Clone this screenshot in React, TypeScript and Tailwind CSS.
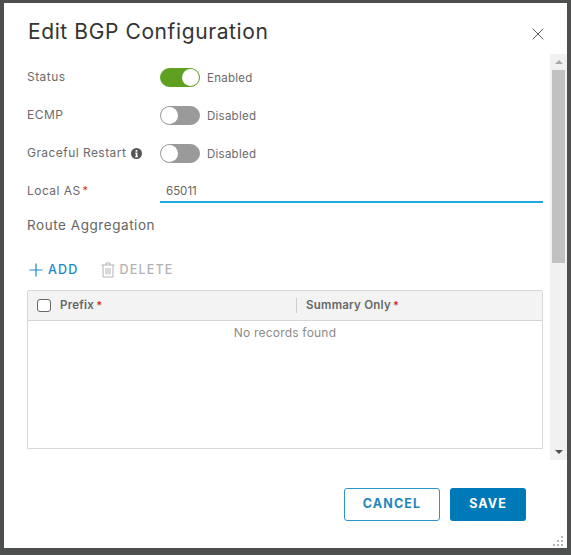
import React from 'react';
import { X } from 'lucide-react';

const Required = () => <span className="text-[#d9301a] text-[11px] ml-[2px] leading-none relative -top-[1px]">*</span>;

const Toggle: React.FC<{ on?: boolean }> = ({ on }) => (
  <div className="flex items-center gap-[7px]">
    <div
      className={`w-[40px] h-[19px] rounded-full flex items-center border ${
        on ? 'bg-[#60a020] border-[#60a020] justify-end' : 'bg-[#9a9a9a] border-[#9a9a9a] justify-start'
      }`}
    >
      <div className="w-[17px] h-[17px] rounded-full bg-white" />
    </div>
    <span className="text-[11.5px] tracking-[0.25px] text-[#6a6a6a] pt-[3px]">{on ? 'Enabled' : 'Disabled'}</span>
  </div>
);

const Row: React.FC<{ label: React.ReactNode; children: React.ReactNode }> = ({ label, children }) => (
  <div className="flex items-center h-[38px]">
    <div className="w-[133px] flex items-center text-[12px] tracking-[0.45px] text-[#6a6a6a]">{label}</div>
    <div className="flex-1">{children}</div>
  </div>
);

const App: React.FC = () => {
  return (
    <div className="w-[571px] h-[555px] bg-[#4d4f4f] pt-[3px] pl-[4px] font-['Inter','Liberation_Sans',sans-serif] overflow-hidden">
      <div className="relative w-[563px] h-[545px] bg-white flex flex-col">
        <div className="flex items-center justify-between h-[51px] pl-[24px] pr-[19px] pt-[4px]">
          <h1 className="text-[21px] leading-none text-[#333] tracking-[0.6px] mt-[2px]">Edit BGP Configuration</h1>
          <X className="w-[20px] h-[20px] text-[#555] mt-[6px]" strokeWidth={1.15} />
        </div>

        <div className="flex flex-1 pl-[23px]">
          <div className="flex-1 flex flex-col pr-[7px] pt-[4px]">
            <Row label="Status"><Toggle on /></Row>
            <Row label="ECMP"><Toggle /></Row>
            <Row
              label={
                <>
                  Graceful Restart
                  <svg viewBox="0 0 12 12" className="w-[11px] h-[11px] ml-[5px]">
                    <circle cx="6" cy="6" r="6" fill="#555" />
                    <path d="M5 2.3H7V4H5ZM4.6 5H7V8.8H7.6V10H4.6V8.8H5.2V6.2H4.6Z" fill="#fff" />
                  </svg>
                </>
              }
            >
              <Toggle />
            </Row>
            <div className="flex items-start h-[38px]">
              <div className="w-[133px] h-[38px] text-[12px] tracking-[0.45px] text-[#6a6a6a] flex items-center">
                Local AS<Required />
              </div>
              <div className="flex-1 h-[24px] mt-[7px] flex items-center pl-[6px] pt-[3px] border-b-2 border-[#1ea7e1] text-[11.5px] text-[#666]">
                65011
              </div>
            </div>
            <div className="text-[13.5px] tracking-[0.55px] text-[#666] mt-[5px] mb-[1px] leading-[20px]">Route Aggregation</div>

            <div className="flex items-center h-[20px] mt-[24px] text-[12.5px] font-medium tracking-[1.2px]">
              <div className="flex items-center text-[#1d8ac7] ml-[2px]">
                <svg viewBox="0 0 14 14" className="w-[14px] h-[14px] mr-[5px]" fill="none" stroke="#1d8ac7" strokeWidth="1.2">
                  <path d="M7 0.5V13.5M0.5 7H13.5" />
                </svg>
                ADD
              </div>
              <div className="flex items-center text-[#b3b3b3] ml-[22px]">
                <svg viewBox="0 0 14 16" className="w-[14px] h-[16px] mr-[5px]" fill="none" stroke="#b3b3b3" strokeWidth="1">
                  <path d="M0.5 3H13.5M5 3V1H9V3M2 3V15H12V3M5 6V12.5M7 6V12.5M9 6V12.5" />
                </svg>
                DELETE
              </div>
            </div>

            <div className="mt-[10px] h-[159px] border border-[#d8d8d8] rounded-t-[2px] flex flex-col">
              <div className="h-[30px] bg-[#f3f3f3] border-b border-[#d4d4d4] flex items-center text-[11.5px] font-semibold tracking-[0.25px] text-[#666]">
                <div className="w-[268px] flex items-center pl-[9px]">
                  <div className="w-[14px] h-[13px] border-[1.5px] border-[#666] rounded-[3px] bg-white mr-[9px]" />
                  <span className="pt-[1px] flex items-center">Prefix<Required /></span>
                </div>
                <div className="w-[1px] h-[15px] bg-[#cfcfcf]" />
                <div className="pl-[9px] pt-[1px] flex items-center">
                  Summary Only<Required />
                </div>
              </div>
              <div className="flex-1 text-center text-[12px] tracking-[0.2px] text-[#8c8c8c] pt-[3px]">No records found</div>
            </div>
          </div>

          <div className="w-[17px] h-[406px] bg-[#f1f1f1] flex flex-col items-center">
            <div className="h-[16px] flex items-center justify-center">
              <div className="w-0 h-0 border-x-[4px] border-x-transparent border-b-[4px] border-b-[#a8a8a8]" />
            </div>
            <div className="w-[13px] h-[193px] bg-[#c1c1c1]" />
            <div className="mt-auto h-[16px] flex items-center justify-center">
              <div className="w-0 h-0 border-x-[4px] border-x-transparent border-t-[4px] border-t-[#505050]" />
            </div>
          </div>
        </div>

        <div className="flex justify-end gap-[10px] pr-[41px] pb-[27px] text-[12.5px] font-bold tracking-[1.1px]">
          <div className="w-[96px] h-[33px] border border-[#2f95c8] rounded-[3px] text-[#1f87bd] flex items-center justify-center">
            CANCEL
          </div>
          <div className="w-[76px] h-[33px] bg-[#0079b8] rounded-[3px] text-white flex items-center justify-center">
            SAVE
          </div>
        </div>

        <svg viewBox="0 0 12 12" className="absolute right-[2px] bottom-[1px] w-[12px] h-[12px]" fill="#b5b5b5">
          <rect x="8" y="1" width="2" height="2" />
          <rect x="4" y="5" width="2" height="2" />
          <rect x="8" y="5" width="2" height="2" />
          <rect x="0" y="9" width="2" height="2" />
          <rect x="4" y="9" width="2" height="2" />
          <rect x="8" y="9" width="2" height="2" />
        </svg>
      </div>
    </div>
  );
};

export default App;
